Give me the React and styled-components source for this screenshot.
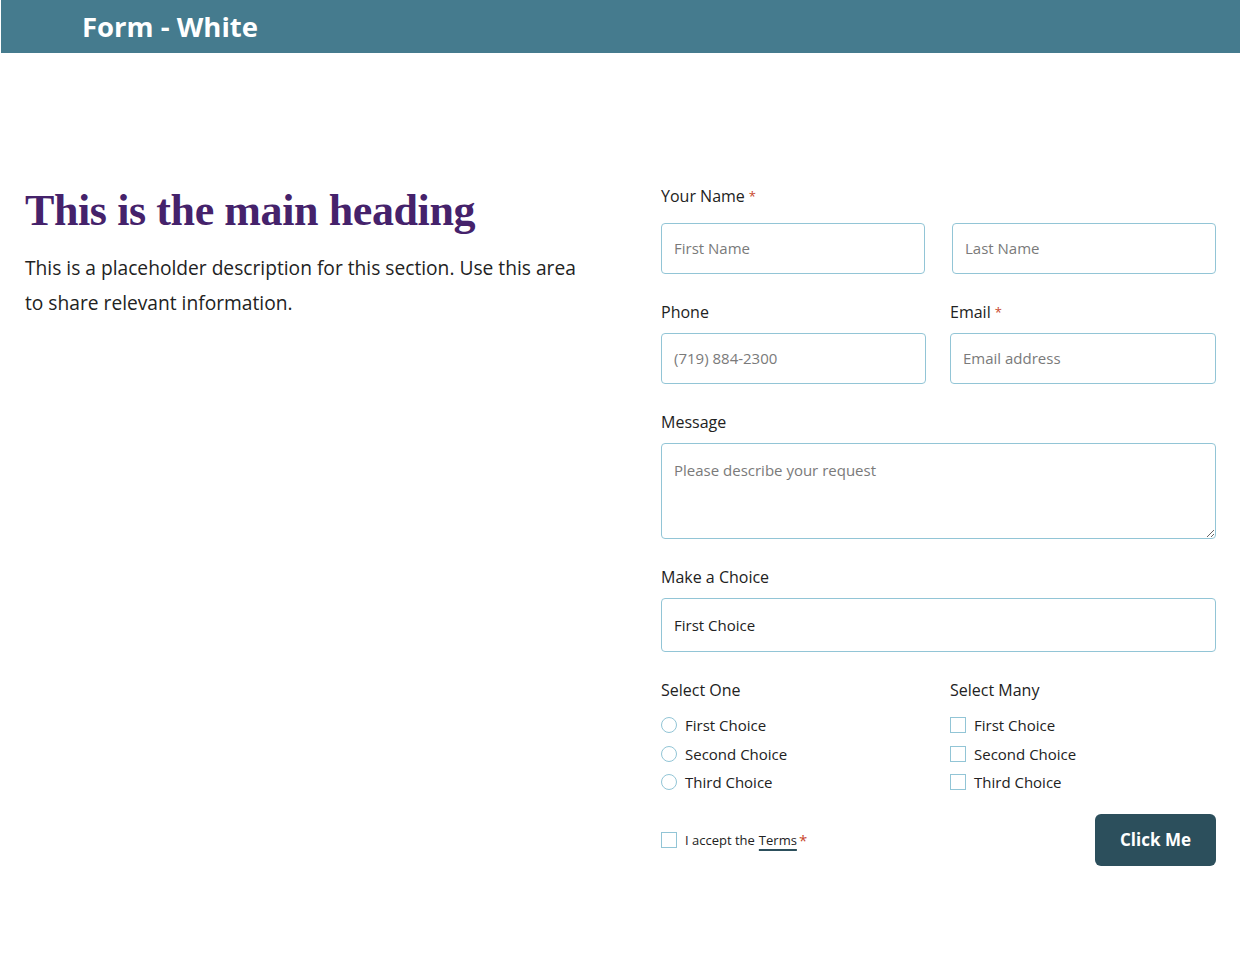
import React from "react";
import styled, { createGlobalStyle } from "styled-components";

const Global = createGlobalStyle`
  html, body { margin: 0; padding: 0; background: #fff; }
  body { font-family: "Open Sans", "Noto Sans", sans-serif; color: #222; }
  * { box-sizing: border-box; }
`;

const Header = styled.header`
  height: 53px;
  margin-left: 1px;
  background: #457b8e;
  display: flex;
  align-items: center;
  padding-left: 81px;
`;

const HeaderTitle = styled.h1`
  margin: 0;
  font-family: "Open Sans", sans-serif;
  font-weight: 700;
  font-size: 27.5px;
  color: #fff;
`;

const Main = styled.main`
  display: grid;
  grid-template-columns: 1fr 555px;
  column-gap: 40px;
  padding: 132px 24px 60px 25px;
`;

const Intro = styled.section`
  padding-top: 2px;
`;

const Heading = styled.h2`
  margin: 0;
  font-family: "Liberation Serif", "Times New Roman", serif;
  font-weight: 700;
  font-size: 44px;
  line-height: 48px;
  color: #45226b;
  letter-spacing: -0.4px;
`;

const Description = styled.p`
  margin: 15px 0 0;
  font-size: 19.2px;
  line-height: 35px;
  color: #222;
  max-width: 560px;
`;

const Form = styled.form`
  display: flex;
  flex-direction: column;
`;

const Group = styled.div`
  display: flex;
  flex-direction: column;
  margin-top: ${(p) => (p.$first ? "0" : "27px")};
`;

const Row = styled.div`
  display: grid;
  grid-template-columns: ${(p) => p.$cols || "1fr 1fr"};
  column-gap: ${(p) => p.$gap || "24px"};
  margin-top: ${(p) => (p.$first ? "0" : "27px")};
`;

const Label = styled.label`
  font-size: 16px;
  line-height: 22px;
  color: #222;
  margin-bottom: ${(p) => p.$space || "10px"};
`;

const Req = styled.span`
  color: #c8462b;
  font-size: 13px;
  margin-left: 4px;
  vertical-align: 1px;
`;

const fieldBase = `
  width: 100%;
  border: 1px solid #92c5d6;
  border-radius: 4px;
  background: #fff;
  font-family: "Open Sans", sans-serif;
  font-size: 15px;
  color: #222;
  padding: 0 12px;
  outline: none;
  &::placeholder { color: #7a7a7a; opacity: 1; }
`;

const Input = styled.input`
  ${fieldBase}
  height: 51px;
  padding-bottom: 1px;
`;

const TextArea = styled.textarea`
  ${fieldBase}
  height: 96px;
  padding: 15px 12px;
  line-height: 22px;
  resize: vertical;
  display: block;
`;

const Select = styled.div`
  ${fieldBase}
  height: 54px;
  display: flex;
  align-items: center;
`;

const OptionList = styled.div`
  display: flex;
  flex-direction: column;
`;

const Option = styled.label`
  display: flex;
  align-items: center;
  height: 28.5px;
  font-size: 15px;
  color: #222;
`;

const Radio = styled.span`
  width: 16px;
  height: 16px;
  border-radius: 50%;
  border: 1px solid #92c5d6;
  margin-right: 8px;
  flex: none;
`;

const Box = styled.span`
  width: 16px;
  height: 16px;
  border: 1.5px solid #92c5d6;
  margin-right: 8px;
  flex: none;
`;

const Footer = styled.div`
  display: flex;
  align-items: center;
  justify-content: space-between;
  margin-top: 17px;
`;

const Terms = styled.label`
  display: flex;
  align-items: center;
  font-size: 13px;
  color: #222;
`;

const TermsLink = styled.span`
  margin-left: 4px;
  text-decoration: underline;
  text-decoration-color: #2c4f5c;
  text-decoration-thickness: 2px;
  text-underline-offset: 4px;
`;

const TermsReq = styled.span`
  color: #c8462b;
  font-size: 15px;
  margin-left: 2px;
`;

const Button = styled.button`
  width: 121px;
  height: 52px;
  border: none;
  border-radius: 6px;
  background: #2c4f5c;
  color: #fff;
  font-family: "Open Sans", sans-serif;
  font-weight: 700;
  font-size: 17px;
  cursor: pointer;
`;

const choices = ["First Choice", "Second Choice", "Third Choice"];

export default function App() {
  return (
    <>
      <Global />
      <Header>
        <HeaderTitle>Form - White</HeaderTitle>
      </Header>
      <Main>
        <Intro>
          <Heading>This is the main heading</Heading>
          <Description>
            This is a placeholder description for this section. Use this area to share relevant information.
          </Description>
        </Intro>
        <Form onSubmit={(e) => e.preventDefault()}>
          <Group $first>
            <Label $space="16px">
              Your Name<Req>*</Req>
            </Label>
            <Row $first $cols="1fr 1fr" $gap="27px">
              <Input placeholder="First Name" />
              <Input placeholder="Last Name" />
            </Row>
          </Group>
          <Row $cols="265px 266px">
            <Group $first>
              <Label>Phone</Label>
              <Input placeholder="(719) 884-2300" />
            </Group>
            <Group $first>
              <Label>
                Email<Req>*</Req>
              </Label>
              <Input placeholder="Email address" />
            </Group>
          </Row>
          <Group>
            <Label>Message</Label>
            <TextArea placeholder="Please describe your request" />
          </Group>
          <Group>
            <Label>Make a Choice</Label>
            <Select>First Choice</Select>
          </Group>
          <Row $cols="265px 266px">
            <Group $first>
              <Label>Select One</Label>
              <OptionList>
                {choices.map((c) => (
                  <Option key={c}>
                    <Radio />
                    {c}
                  </Option>
                ))}
              </OptionList>
            </Group>
            <Group $first>
              <Label>Select Many</Label>
              <OptionList>
                {choices.map((c) => (
                  <Option key={c}>
                    <Box />
                    {c}
                  </Option>
                ))}
              </OptionList>
            </Group>
          </Row>
          <Footer>
            <Terms>
              <Box />
              I accept the<TermsLink>Terms</TermsLink>
              <TermsReq>*</TermsReq>
            </Terms>
            <Button type="submit">Click Me</Button>
          </Footer>
        </Form>
      </Main>
    </>
  );
}
